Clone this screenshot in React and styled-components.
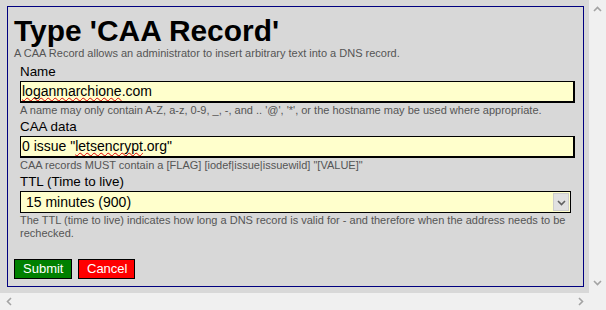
import React from "react";
import styled, { createGlobalStyle } from "styled-components";

const GlobalStyle = createGlobalStyle`
  html, body { margin: 0; padding: 0; }
  body { font-family: "Liberation Sans", Arial, sans-serif; background: #d8d8d8; }
`;

const Frame = styled.div`
  width: 606px;
  height: 310px;
  display: grid;
  grid-template-columns: 589px 17px;
  grid-template-rows: 293px 17px;
  overflow: hidden;
`;

const Viewport = styled.div`
  background: #d8d8d8;
  padding: 6px 0 0 7px;
  overflow: hidden;
  box-sizing: border-box;
`;

const Panel = styled.div`
  width: 577px;
  box-sizing: border-box;
  border: 1px solid #000080;
  padding: 9px 6px 7px 6px;
`;

const Title = styled.h1`
  margin: 0;
  font-size: 29.9px;
  line-height: 30px;
  font-weight: bold;
  color: #000;
`;

const Desc = styled.p`
  margin: 1px 0 0 0;
  font-size: 11px;
  line-height: 13px;
  color: #555;
`;

const Fields = styled.div`
  margin: 4px 2px 0 6px;
  display: flex;
  flex-direction: column;
`;

const Label = styled.label`
  display: block;
  font-size: 13.4px;
  line-height: 15px;
  color: #000;
  margin-top: ${(p) => (p.$first ? "0" : "2px")};
`;

const TextBox = styled.div`
  margin-top: 2px;
  height: 22px;
  box-sizing: border-box;
  border: 2px solid #000;
  border-width: 1px 2px 2px 1px;
  background: #ffffcc;
  font-size: 14px;
  line-height: 19px;
  padding: 0 1px;
  white-space: nowrap;
  overflow: hidden;
  color: #000;
`;

const Misspelled = styled.span`
  text-decoration: underline wavy #e00000;
  text-decoration-thickness: 1px;
  text-underline-offset: 1px;
  text-decoration-skip-ink: none;
`;

const SelectBox = styled.div`
  margin: 2px 4px 0 0;
  height: 22px;
  box-sizing: border-box;
  border: 1px solid #000;
  background: #ffffcc;
  display: flex;
  align-items: stretch;
  font-size: 14px;
`;

const SelectValue = styled.span`
  flex: 1;
  padding-left: 5px;
  line-height: 20px;
  color: #000;
`;

const DropButton = styled.span`
  width: 16px;
  margin: 1px;
  box-sizing: border-box;
  background: #e1e1e1;
  border: 1px solid #cdcdcd;
  display: flex;
  align-items: center;
  justify-content: center;
`;

const Hint = styled.div`
  margin-top: 1px;
  font-size: 11px;
  line-height: 13px;
  color: #555;
`;

const Actions = styled.div`
  margin-top: 19px;
  display: flex;
  gap: 6px;
`;

const Button = styled.button`
  height: 20px;
  box-sizing: border-box;
  padding: 0 8px;
  border: 1px solid #000;
  background: ${(p) => (p.$variant === "cancel" ? "#ff0000" : "#008000")};
  color: #fff;
  font-family: "Liberation Sans", Arial, sans-serif;
  font-size: 13px;
  line-height: 18px;
  border-radius: 0;
  width: ${(p) => (p.$variant === "cancel" ? "57px" : "58px")};
`;

const VScroll = styled.div`
  background: #f0f0f0;
  display: flex;
  flex-direction: column;
  justify-content: space-between;
  align-items: center;
  padding: 5px 0 6px;
  box-sizing: border-box;
`;

const HScroll = styled.div`
  background: #f0f0f0;
  display: flex;
  justify-content: space-between;
  align-items: center;
  padding: 0 4px 0 5px;
  box-sizing: border-box;
`;

const Corner = styled.div`
  background: #f0f0f0;
`;

const Chevron = ({ dir, color = "#a3a3a3", size = 9 }) => {
  const rot = { up: 0, right: 90, down: 180, left: 270 }[dir];
  return (
    <svg width={size} height={size} viewBox="0 0 9 9" style={{ transform: `rotate(${rot}deg)` }}>
      <polyline points="1,6 4.5,2.5 8,6" fill="none" stroke={color} strokeWidth="1.6" />
    </svg>
  );
};

export default function App() {
  return (
    <>
      <GlobalStyle />
      <Frame>
        <Viewport>
          <Panel>
            <Title>Type 'CAA Record'</Title>
            <Desc>A CAA Record allows an administrator to insert arbitrary text into a DNS record.</Desc>
            <Fields>
              <Label $first>Name</Label>
              <TextBox role="textbox">
                <Misspelled>loganmarchione</Misspelled>.com
              </TextBox>
              <Hint>
                A name may only contain A-Z, a-z, 0-9, _, -, and .. '@', '*', or the hostname may be used where appropriate.
              </Hint>
              <Label>CAA data</Label>
              <TextBox role="textbox">
                0 issue "<Misspelled>letsencrypt</Misspelled>.org"
              </TextBox>
              <Hint>CAA records MUST contain a [FLAG] [iodef|issue|issuewild] "[VALUE]"</Hint>
              <Label>TTL (Time to live)</Label>
              <SelectBox role="combobox">
                <SelectValue>15 minutes (900)</SelectValue>
                <DropButton>
                  <Chevron dir="down" color="#606060" />
                </DropButton>
              </SelectBox>
              <Hint>
                The TTL (time to live) indicates how long a DNS record is valid for - and therefore when the address needs to be rechecked.
              </Hint>
            </Fields>
            <Actions>
              <Button $variant="submit">Submit</Button>
              <Button $variant="cancel">Cancel</Button>
            </Actions>
          </Panel>
        </Viewport>
        <VScroll>
          <Chevron dir="up" />
          <Chevron dir="down" />
        </VScroll>
        <HScroll>
          <Chevron dir="left" />
          <Chevron dir="right" />
        </HScroll>
        <Corner />
      </Frame>
    </>
  );
}
